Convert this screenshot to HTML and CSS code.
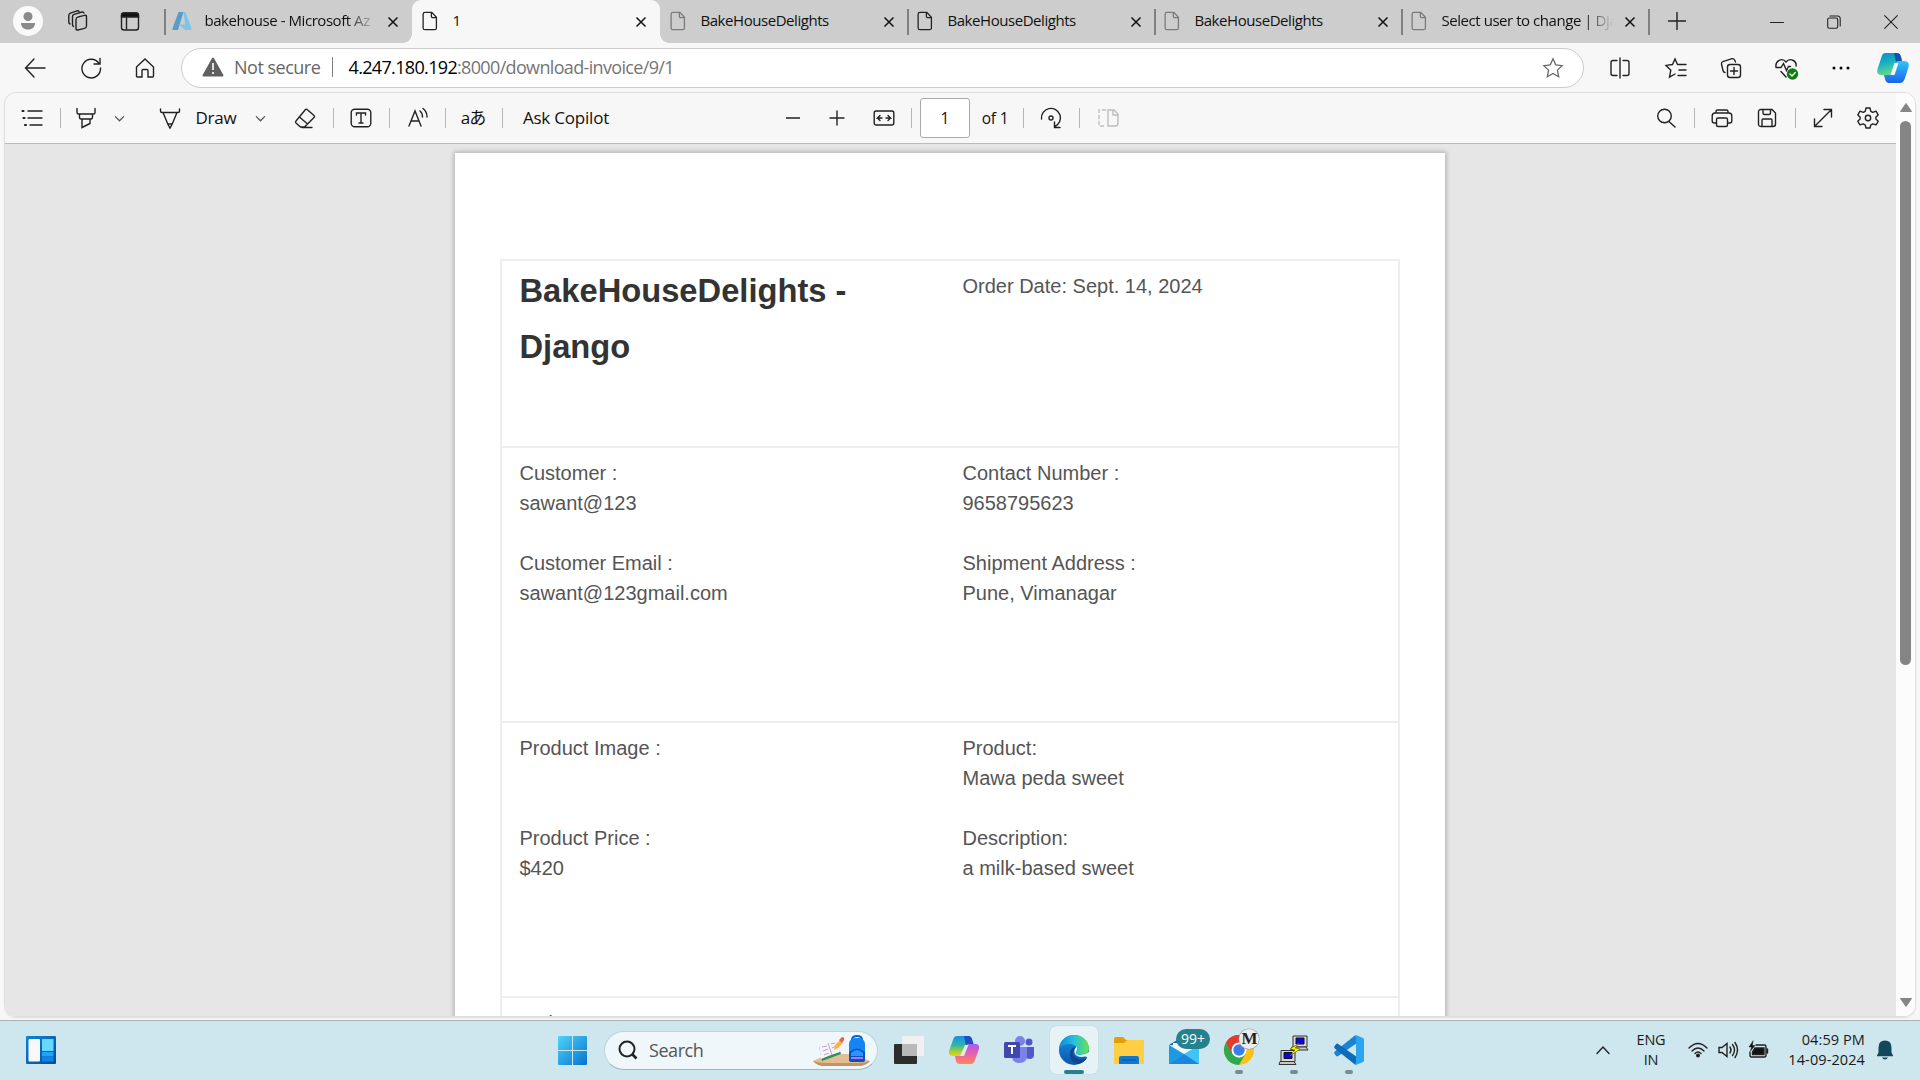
FILE: index.html
```html
<!DOCTYPE html>
<html lang="en">
<head>
<meta charset="utf-8">
<title>1</title>
<link rel="stylesheet" href="styles.css">
</head>
<body>
<svg class="defs" width="0" height="0">
  <symbol id="doc" viewBox="0 0 24 24"><path d="M6.5 2.500H14l5 5.500v11.500a2 2 0 0 1-2 2H6.500a2 2 0 0 1-2-2V4.500a2 2 0 0 1 2-2zM13.500 2.800v4a1.500 1.500 0 0 0 1.500 1.500h4"/></symbol>
  <symbol id="close" viewBox="0 0 12 12"><path d="M1.500 1.500l9 9M10.500 1.500l-9 9"/></symbol>
  <symbol id="chev" viewBox="0 0 12 12"><path d="M1.500 4l4.500 4.500L10.500 4"/></symbol>
</svg>

<div class="browser">
  <div class="tabstrip">
    <div class="corner">
      <span class="avatar"><svg width="18" height="20" viewBox="0 0 18 20"><circle cx="9" cy="5.500" r="4.500" fill="#8a8a8a"/><path d="M2 12h14c0 4-2.500 6.500-7 6.500S2 16 2 12z" fill="#8a8a8a"/></svg></span>
      <svg class="ln" width="24" height="24" viewBox="0 0 24 24"><rect x="10" y="7" width="10.500" height="13" rx="2" transform="skewY(-14) translate(0 4)"/><path d="M7.500 17.500Q6.500 17 6.500 15.500V7.500Q6.500 6 8 5.400L16 3q1.500-.3 2 1M4 15Q2.800 14.500 2.800 13V6.500Q2.800 4.800 4.300 4.200L11 1.800q1.300-.3 2 .5"/></svg>
      <svg class="ln" width="24" height="24" viewBox="0 0 24 24"><rect x="3.500" y="4" width="17" height="17" rx="2.500"/><path d="M3.500 8V6.500A2.500 2.500 0 0 1 6 4h12a2.500 2.500 0 0 1 2.500 2.500V8z" fill="#111"/><path d="M8.500 8v12"/></svg>
    </div>
    <div class="tab sep">
      <svg class="fav" width="22" height="22" viewBox="0 0 22 22"><path d="M7.500 2h5L7 20H2.500Q1 20 1.500 18.500z" fill="#5b9cc4"/><path d="M12.500 2h2l6 16.500Q20.800 20 19.500 20H14L8 14.500h6z" fill="#7cc4ea"/></svg>
      <span class="title fade">bakehouse - Microsoft Az</span><svg class="x"><use href="#close"/></svg>
    </div>
    <div class="tab active"><svg class="fav ln"><use href="#doc"/></svg><span class="title">1</span><svg class="x"><use href="#close"/></svg></div>
    <div class="tab"><svg class="fav ln grey"><use href="#doc"/></svg><span class="title">BakeHouseDelights</span><svg class="x"><use href="#close"/></svg></div>
    <div class="tab sep"><svg class="fav ln"><use href="#doc"/></svg><span class="title">BakeHouseDelights</span><svg class="x"><use href="#close"/></svg></div>
    <div class="tab sep"><svg class="fav ln grey"><use href="#doc"/></svg><span class="title">BakeHouseDelights</span><svg class="x"><use href="#close"/></svg></div>
    <div class="tab sep"><svg class="fav ln grey"><use href="#doc"/></svg><span class="title fade">Select user to change | Dja</span><svg class="x"><use href="#close"/></svg></div>
    <div class="newtab sep"><svg class="ln" width="20" height="20" viewBox="0 0 20 20"><path d="M10 1.500v17M1.500 10h17"/></svg></div>
    <div class="winctl">
      <svg class="ln thin" width="14" height="14" viewBox="0 0 14 14"><path d="M.5 7.500h13"/></svg>
      <svg class="ln thin" width="14" height="14" viewBox="0 0 14 14"><rect x=".7" y="3" width="10" height="10.300" rx="1.500"/><path d="M3 1h7.500A2.500 2.500 0 0 1 13.200 3.500V11"/></svg>
      <svg class="ln thin" width="14" height="14" viewBox="0 0 14 14"><path d="M.7.7l12.600 12.600M13.300.7L.7 13.300"/></svg>
    </div>
  </div>

  <div class="nav">
    <svg class="ln" width="24" height="24" viewBox="0 0 24 24"><path d="M22 12H2.500M11 3L2.500 12l8.500 9"/></svg>
    <svg class="ln" width="24" height="24" viewBox="0 0 24 24"><path d="M20 7.500A9.300 9.300 0 1 0 21.500 12M21 2.500V8h-6"/></svg>
    <svg class="ln" width="24" height="24" viewBox="0 0 24 24"><path d="M3.500 11L12 3l8.500 8v9q0 1-1 1H15v-6.500q0-1-1-1h-4q-1 0-1 1V21H4.500q-1 0-1-1z"/></svg>
    <div class="address">
      <svg width="22" height="20" viewBox="0 0 22 20"><path d="M11 1.500L20.500 18.500H1.500z" fill="#606060" stroke="#606060" stroke-width="2" stroke-linejoin="round"/><path d="M11 6v7M11 15v2" stroke="#fff" stroke-width="1.600"/></svg>
      <span class="insecure">Not secure</span>
      <span class="url"><b>4.247.180.192</b>:8000/download-invoice/9/1</span>
      <svg class="ln star" width="22" height="22" viewBox="0 0 24 24"><path d="M12 2l3 6.500 7 .9-5.200 4.900 1.400 7.200L12 18l-6.200 3.500 1.400-7.200L2 9.400l7-.9z"/></svg>
    </div>
    <svg class="ln" width="24" height="24" viewBox="0 0 24 24"><path d="M12 2v20M9 4.500H5A2 2 0 0 0 3 6.500v11a2 2 0 0 0 2 2h4M15 4.500h4a2 2 0 0 1 2 2v11a2 2 0 0 1-2 2h-4"/></svg>
    <svg class="ln" width="24" height="24" viewBox="0 0 24 24"><path d="M13.500 8.500L11 3 8.500 8.500 2 9.400l4.800 4.800-1.300 7L11 18M13.500 8.500H22M15 14h7M14 19.500h8"/></svg>
    <svg class="ln" width="24" height="24" viewBox="0 0 24 24"><rect x="8.500" y="8.500" width="13" height="13" rx="2.500"/><path d="M15 11.500v7M11.500 15h7M6 16.500q-1.600-.2-2-2L2.500 8q-.3-1.800 1.300-2.400L13 2.700q1.800-.4 2.600 1.300L16.500 6"/></svg>
    <svg class="ln" width="24" height="24" viewBox="0 0 24 24"><path d="M12 21l-5-5.500M2 11c-1-6 6-10 10-5 4-5 11-1 10 4M2 11.500h5l2.500-4 3 7 2-4h2"/><circle cx="18.500" cy="18" r="5.700" fill="#107c10" stroke="none"/><path d="M16 18l2 2 3.300-3.500" stroke="#fff"/></svg>
    <svg width="24" height="24" viewBox="0 0 24 24"><circle cx="5" cy="12" r="1.500"/><circle cx="12" cy="12" r="1.500"/><circle cx="19" cy="12" r="1.500"/></svg>
    <svg width="32" height="30" viewBox="0 0 32 30"><defs><linearGradient id="ca" x2=".3" y2="1"><stop stop-color="#0a8bc9"/><stop offset=".5" stop-color="#16b1c4"/><stop offset="1" stop-color="#62d987"/></linearGradient><linearGradient id="cb" x2="0" y2="1"><stop stop-color="#2fc6f5"/><stop offset="1" stop-color="#1764ee"/></linearGradient></defs><path d="M8.500 0h11q3.500 0 4.500 4l1 4h-3q-3 0-4 4l-2.500 7q-1 3-4 3H5q-6 0-4.500-6L4.500 4Q5.500 0 8.500 0z" fill="url(#ca)"/><path d="M17 0h3q3 0 4 4l1 4h-3q-2 0-3 1z" fill="#1550b0"/><path d="M21.500 8H27q6 0 4.500 6l-3.500 11q-1.500 5-5 5H12q-3 0-4-4l-1-4h4q3.500 0 4.500-3L18 12q1-4 3.500-4z" fill="url(#cb)"/><path d="M17.500 10h4l-4 12h-4z" fill="#f7f7f7"/></svg>
  </div>

  <div class="viewer">
    <div class="main">
      <div class="tools">
        <svg class="ln" width="22" height="22" viewBox="0 0 22 22"><path d="M7 4h14M7 11h14M9 18h12"/><path d="M1.500 4h1M2.500 11h1M4 18h1" stroke-width="2.200"/></svg>
        <i></i>
        <svg class="ln" width="22" height="22" viewBox="0 0 22 22"><path d="M2 1.500v4q0 1.500 1.500 1.500h15Q20 7 20 5.500v-4M4.500 7v3q0 2 1.500 2h10q1.500 0 1.500-2V7M7 12v8.500l8-4V12"/></svg>
        <svg class="ln c" width="11" height="11"><use href="#chev"/></svg>
        <svg class="ln" width="22" height="22" viewBox="0 0 22 22"><path d="M1.500 2v2q0 1.500 1.500 1.500h16q1.500 0 1.500-1.500V2M4 5.500l5 12 2 3.500 2-3.500 5-12M9 17h4"/></svg>
        <span class="label">Draw</span>
        <svg class="ln c" width="11" height="11"><use href="#chev"/></svg>
        <svg class="ln" width="22" height="22" viewBox="0 0 22 22"><path d="M12.500 2L20 8.500q1 1 0 2L10.500 20H6.500L2 16q-1-1 0-2L11.500 2.500q.6-.7 1.500 0zM5.500 10l8 7M8 20.500h10"/></svg>
        <i></i>
        <svg class="ln" width="22" height="22" viewBox="0 0 22 22"><rect x="1.200" y="2.200" width="19.600" height="17.600" rx="3.500"/><path d="M6.500 8V6h9v2M11 6v10M9 16h4"/></svg>
        <i></i>
        <svg class="ln" width="22" height="22" viewBox="0 0 22 22"><path d="M2 19L8 4l6 15M4 14h8M13 4q2.500 2 2.500 6M16 1.500q4 3 4 8.500"/></svg>
        <i></i>
        <span class="label aa">aあ</span>
        <i></i>
        <span class="label">Ask Copilot</span>
        <span></span>
        <svg width="14" height="14" viewBox="0 0 14 14"><path d="M0 7h14" stroke="#555" stroke-width="2"/></svg>
        <svg class="ln" width="16" height="16" viewBox="0 0 16 16"><path d="M8 1v14M1 8h14"/></svg>
        <svg class="ln" width="22" height="22" viewBox="0 0 22 22"><rect x="1.200" y="4" width="19.600" height="14" rx="2"/><path d="M9 11H4.500l2.500-2.500M4.500 11L7 13.500M13 11h4.500L15 8.500M17.500 11L15 13.500"/></svg>
        <i></i>
        <span class="pageno">1</span>
        <span class="label small">of 1</span>
        <i></i>
        <svg class="ln" width="22" height="22" viewBox="0 0 22 22"><path d="M1.500 12A9.500 9.500 0 1 1 15 19.500M14.500 15v5.500H20"/><circle cx="11" cy="11" r="2"/></svg>
        <i></i>
        <svg class="ln off" width="22" height="22" viewBox="0 0 22 22"><path d="M11 3h6l4 4v9q0 3-3 3h-7zM16 3v5h5"/><path d="M8.500 3H2v16h6.500" stroke-dasharray="3 3"/></svg>
        <span></span>
        <svg class="ln" width="20" height="20" viewBox="0 0 20 20"><circle cx="8.500" cy="8" r="6.800"/><path d="M13 13.500l6 5.500"/></svg>
        <i></i>
        <svg class="ln" width="22" height="22" viewBox="0 0 22 22"><path d="M5 6V4.500Q5 3 6.500 3h9Q17 3 17 4.500V6M5 16H3.500Q1.200 16 1.200 14V9Q1.200 6 4 6h14q2.800 0 2.800 3v5q0 2-2.300 2H17"/><rect x="5.500" y="11" width="11" height="8.500" rx="1.500"/></svg>
        <svg class="ln save" width="20" height="20" viewBox="0 0 20 20"><path d="M4 1.500h11l3.500 3.500v11q0 2.500-2.500 2.500H4q-2.500 0-2.500-2.500V4Q1.500 1.500 4 1.500zM6 1.500V5q0 1.500 1.500 1.500h4.500q1.500 0 1.500-1.500V1.500M5 18.500V12q0-1 1-1h8q1 0 1 1v6.500"/></svg>
        <i></i>
        <svg class="ln" width="20" height="20" viewBox="0 0 20 20"><path d="M1.500 18.500l17-17M11 1.500h7.500V9M1.500 11v7.500H9"/></svg>
        <svg class="ln gear" width="24" height="24" viewBox="0 0 24 24"><path d="M10 2h4l.8 3.300 2 1L20 5.200l2.200 3.600-2.300 2.400v1.800l2.300 2.300-2.200 3.600-3.200-1-2 1.100L14 22h-4l-.8-3-2-1.100-3.200 1-2.200-3.600 2.300-2.300v-1.800L1.800 8.800 4 5.200l3.200 1.100 2-1z" stroke-linejoin="round"/><circle cx="12" cy="12" r="2.700"/></svg>
      </div>
      <div class="canvas">
        <div class="sheet">
          <div class="invoice">
            <div class="row head"><h1>BakeHouseDelights - Django</h1><p>Order Date: Sept. 14, 2024</p></div>
            <div class="row"><p>Customer :<br>sawant@123<br><br>Customer Email :<br>sawant@123gmail.com</p><p>Contact Number :<br>9658795623<br><br>Shipment Address :<br>Pune, Vimanagar</p></div>
            <div class="row"><p>Product Image :<br><br><br>Product Price :<br>$420</p><p>Product:<br>Mawa peda sweet<br><br>Description:<br>a milk-based sweet</p></div>
            <div class="row"><p>Order Status :</p><p></p></div>
          </div>
        </div>
      </div>
    </div>
    <div class="scroll">
      <svg width="14" height="11" viewBox="0 0 14 11"><path d="M7 1.500L12.500 9.500h-11z" fill="#858585" stroke="#858585" stroke-linejoin="round"/></svg>
      <span class="thumb"></span>
      <svg class="down" width="14" height="11" viewBox="0 0 14 11"><path d="M7 9.500L1.500 1.500h11z" fill="#858585" stroke="#858585" stroke-linejoin="round"/></svg>
    </div>
  </div>
</div>

<div class="taskbar">
  <div class="widgets"><svg width="30" height="28" viewBox="0 0 30 28"><defs><linearGradient id="wg" x2="1" y2="1"><stop stop-color="#0a84dc"/><stop offset="1" stop-color="#0b4a94"/></linearGradient></defs><rect width="30" height="28" rx="1" fill="url(#wg)"/><rect x="2.500" y="3" width="11.500" height="22.500" rx="1" fill="#f8f8f8"/><path d="M16 3h11.500v12H16z" fill="#67d9ff"/><path d="M16 16h11.500v4.500H16z" fill="#1ea4fb"/><path d="M16 21h11.500v4.500H16z" fill="#0b83ee"/></svg></div>
  <div class="apps">
    <span class="app"><svg width="29" height="29" viewBox="0 0 29 29"><defs><linearGradient id="win" x2="1" y2="1"><stop stop-color="#4fd3fb"/><stop offset="1" stop-color="#0573cf"/></linearGradient></defs><path d="M1 0h13v14H0V1q0-1 1-1zM15 0h13q1 0 1 1v13H15zM0 15h14v14H1q-1 0-1-1zM15 15h14v13q0 1-1 1H15z" fill="url(#win)"/></svg></span>
    <div class="search">
      <svg width="20" height="20" viewBox="0 0 20 20" fill="none" stroke="#222" stroke-width="2"><circle cx="9" cy="9" r="7.500"/><path d="M14 14l4.500 4.500" stroke-width="2.600"/></svg>
      <span>Search</span>
      <svg class="school" width="57" height="32" viewBox="0 0 57 32"><path d="M0 26l11-5q4-2 10-2h19l17 7q-4 5-12 5H12Q4 31 0 26z" fill="#e2bd95"/><path d="M0 26q6 2 13 2h31q7 0 13-2-4 5-12 5H12Q4 31 0 26z" fill="#c4935f"/><path d="M6 11l3 15 19-7-1-3z" fill="#2a9159"/><path d="M6 10l9-2 8-3 4 12-9 3-10 4z" fill="#f7f3fb"/><path d="M15 8l4 12M9 12l5-1M10 16l5-2M11 20l5-2M18 9l4-1M19 13l4-2" stroke="#b2a6cc" fill="none"/><path d="M21 15l1-5 5-5 3 3-5 5z" fill="#ffb239"/><path d="M26 5l3-3q3 0 2 3l-2 3z" fill="#f15e54"/><path d="M39 5q0-4 5-4t5 4" fill="none" stroke="#0663c8" stroke-width="2"/><rect x="36" y="3" width="16" height="24" rx="6" fill="#1585f5"/><path d="M36 17q8-7 16 0v8q0 2-3 2H39q-3 0-3-2z" fill="#0652c5"/><path d="M38 18q6-6 12 0v3H38z" fill="#2b94ff"/><path d="M38 23h12" stroke="#a879ed" stroke-width="2"/></svg>
    </div>
    <span class="app"><svg width="30" height="28" viewBox="0 0 30 28"><rect y="8" width="23" height="20" rx="1" fill="#2d2d2d"/><rect x="8" width="22" height="20" rx="1" fill="#f1f1f1"/><path d="M8 8h15v12H8z" fill="#b9b9b9"/></svg></span>
    <span class="app"><svg width="30" height="28" viewBox="0 0 30 28"><defs><linearGradient id="pa" x2="0" y2="1"><stop stop-color="#1a8fe6"/><stop offset=".45" stop-color="#2fb5a8"/><stop offset=".75" stop-color="#9bcf3b"/><stop offset="1" stop-color="#f2d01c"/></linearGradient><linearGradient id="pb" x2="0" y2="1"><stop stop-color="#a45cf0"/><stop offset=".5" stop-color="#ec5fae"/><stop offset="1" stop-color="#ff8a48"/></linearGradient></defs><path d="M8 0h11q3 0 4 3l1.500 5H20q-2.500 0-3.500 3l-2 6q-1 3-4 3H4q-5 0-4-5L4 4Q5 0 8 0z" fill="url(#pa)"/><path d="M15 0h4q3 0 4 3l1.500 5H20q-2 0-3 2z" fill="#1f4fc8"/><path d="M20.500 8H26q5 0 4 5l-4 11q-1 4-4 4H11q-3 0-4-3l-1-5h4.500q3 0 4-3l2.500-6q1-3 3.500-3z" fill="url(#pb)"/><path d="M16 9h3.500L15 20h-4z" fill="#dcecf3"/></svg></span>
    <span class="app"><svg width="30" height="28" viewBox="0 0 30 28"><circle cx="16" cy="5" r="5" fill="#7b83eb"/><circle cx="25" cy="6" r="3.500" fill="#5059c9"/><path d="M21 11h9v8q0 4-4.500 4-3 0-4.500-2z" fill="#5059c9"/><path d="M8 11h15v9q0 7-7.500 7T8 20z" fill="#7b83eb"/><rect y="6" width="16" height="16" rx="1.500" fill="#4048ae"/><path d="M4 10h8M8 10v8" stroke="#fff" stroke-width="2"/></svg></span>
    <span class="app on"><svg width="30" height="30" viewBox="0 0 30 30"><defs><linearGradient id="e1" x1="0" x2="1"><stop stop-color="#1188d6"/><stop offset=".5" stop-color="#24c0e0"/><stop offset="1" stop-color="#6be24d"/></linearGradient><linearGradient id="e2" x2="0" y2="1"><stop stop-color="#1790e0"/><stop offset="1" stop-color="#0d55ad"/></linearGradient></defs><circle cx="15" cy="15" r="15" fill="url(#e2)"/><path d="M0 14C1 5 7 0 15 0c9 0 15 6 15 13 0 5-4 7-8 7-3 0-5-1-5-2s2-2 1-5C16 8 5 7 0 14z" fill="url(#e1)"/><path d="M17 12q-6 0-6 7 0 8 8 10 6-1 9-6-4 2-8 1-6-2-6-6 0-3 3-6z" fill="#10468c"/><path d="M18 11.500q-4 3-2 7.500 3 4 10 2.500l4 1q1-2 0-5.500-4 3-8 3-5 0-5-2 0-1 1-3z" fill="#e6f2f6"/></svg></span>
    <span class="app"><svg width="30" height="27" viewBox="0 0 30 27"><path d="M0 7V2q0-2 2-2h7l3 3h16q2 0 2 2v3H0z" fill="#dfa00a"/><path d="M0 6h10l3-3h15q2 0 2 2v22H0z" fill="#ffce45"/><path d="M5 27v-6q0-2 2-2h16q2 0 2 2v6z" fill="#1079cf"/><path d="M8 23h14" stroke="#08519a"/></svg></span>
    <span class="app"><svg width="30" height="28" viewBox="0 0 30 28"><path d="M0 9L15 0l15 9z" fill="#0d5db5"/><path d="M4 7h22v8l-11 6-11-6z" fill="#f3f6f8"/><path d="M0 9l15 9v10H0z" fill="#1d9ae4"/><path d="M30 9v19H0l15-10z" fill="#42c3f5"/><path d="M0 28l15-10 15 10z" fill="#1a86dd"/></svg><em class="badge">99+</em></span>
    <span class="app run"><svg width="30" height="30" viewBox="0 0 30 30"><circle cx="15" cy="15" r="15" fill="#fbc116"/><path d="M2 7.500A15 15 0 0 1 28 7.500H15z" fill="#e33b2e"/><path d="M2 7.500L8.500 19 15 22.500 15 30A15 15 0 0 1 2 7.500z" fill="#2da94f"/><path d="M2 7.500A15 15 0 0 1 15 0v7.500L9 13l-1 6z" fill="#e33b2e"/><path d="M15 30l7-12-7 5z" fill="#2da94f"/><circle cx="15" cy="15" r="7.500" fill="#fff"/><circle cx="15" cy="15" r="5.700" fill="#397fec"/></svg><em class="profile">M</em></span>
    <span class="app run"><svg width="30" height="30" viewBox="0 0 30 30"><g id="pc"><path d="M14 1h14v11H14z" fill="#d9d9d9" stroke="#333"/><path d="M17 3h8v6h-8z" fill="#0804f0" stroke="#111"/><path d="M13 12h14l2 3H12z" fill="#c7c7c7" stroke="#333"/></g><use href="#pc" x="-12" y="14.500"/><path d="M20 8l-9 6 5 1-5 6 10-7-5-1z" fill="#ff0" stroke="#665c00" stroke-width=".7"/></svg></span>
    <span class="app run"><svg width="30" height="30" viewBox="0 0 30 30"><path d="M1 19.500l-.7-1q-.5-1 .5-2L21.500 0l1.500 8L3.500 21.500q-1 .5-2.500-2z" fill="#1b84d2"/><path d="M1 10.500l-.7 1q-.5 1 .5 2L21.500 30l1.500-8L3.500 8.500Q2.500 8 1 10.500z" fill="#0d6cb8"/><path d="M22 0l7 3q1 .5 1 1.500v21q0 1-1 1.500l-7 3q-1-1 0-2V2q-1-1 0-2z" fill="#2ba5f2"/></svg></span>
  </div>
  <div class="tray">
    <svg class="ln b" width="14" height="10" viewBox="0 0 14 10"><path d="M1 8.500L7 2l6 6.500"/></svg>
    <span class="lang">ENG<br>IN</span>
    <svg class="ln b" width="20" height="16" viewBox="0 0 20 16"><path d="M1 6q9-9 18 0M4 9q6-6 12 0M7 11.500q3-3 6 0"/><circle cx="10" cy="13.500" r="1.300" fill="#111"/></svg>
    <svg class="ln b" width="20" height="18" viewBox="0 0 20 18"><path d="M1 6.500h3l5-4v13l-5-4H1zM12 6q2 3 0 6M14.500 3.500q4 5.500 0 11M17 1.500q5 7.500 0 15"/></svg>
    <svg class="ln b" width="21" height="18" viewBox="0 0 21 18"><path d="M8 4h8.500Q18 4 18 6v8q0 2-1.500 2h-13Q2 16 2 14v-3M19.500 8v4"/><path d="M7 7h9v6.500H4.500V11z" fill="#111"/><path d="M5 0L1 6h2.500L2.500 10 7 4.500H4.500z" fill="#111" stroke-width=".5"/></svg>
    <span class="clock">04:59 PM<br>14-09-2024</span>
    <svg width="18" height="20" viewBox="0 0 18 20"><path d="M9 .5q6.500 0 6.500 7v5l1.500 3v.7H1v-.7l1.500-3v-5q0-7 6.500-7zM6 17.500h6q-1 2-3 2t-3-2z" fill="#13485a"/></svg>
  </div>
</div>
</body>
</html>
```
FILE: styles.css
```css
* { box-sizing: border-box; }
body { margin: 0; width: 1920px; height: 1080px; overflow: hidden; font-family: "Open Sans", "Noto Sans CJK JP", sans-serif; color: #111; background: #f7f7f7; }
svg { display: block; flex: none; overflow: visible; }
.defs { position: absolute; }
.ln { fill: none; stroke: #222; stroke-width: 1.4; stroke-linecap: round; }
.thin { stroke-width: 1.1; }
.browser { height: 1020px; display: flex; flex-direction: column; background: #f7f7f7; }

.tabstrip { height: 43px; display: flex; background: #cdcdcd; }
.corner { width: 164px; display: grid; grid-template-columns: 30px 24px 24px; column-gap: 24px; padding: 0 0 2px 13px; align-items: center; }
.corner .ln:last-child { margin-left: 3px; }
.corner .ln:nth-child(2) { margin-left: -1px; }
.avatar { width: 30px; height: 30px; border-radius: 50%; background: #fafafa; display: grid; place-items: center; }
.tab { width: 247px; display: flex; align-items: center; padding: 0 0 2px 7px; position: relative; }
.tab:nth-child(2), .tab.active { width: 248px; }
.sep::before { content: ""; position: absolute; left: 0; top: 9px; width: 1.5px; height: 26px; background: #808080; }
.fav { width: 22px; height: 22px; }
.fav.grey { stroke: #7b7b7b; }
.title { width: 173px; margin-left: 11.5px; margin-top: -2px; font-size: 15px; line-height: 20px; letter-spacing: -.45px; white-space: nowrap; color: #111; }
.fade { background: linear-gradient(90deg, #111 82%, #cdcdcd 99%); -webkit-background-clip: text; background-clip: text; color: transparent; }
.tab .x { width: 12px; height: 12px; margin-left: 9.5px; stroke: #111; stroke-width: 1.5; margin-top: 2px; }
.active { background: #f7f7f7; border-radius: 9px 9px 0 0; }
.active::before, .active::after { content: ""; position: absolute; bottom: 0; width: 9px; height: 9px; }
.active::before { left: -9px; background: radial-gradient(circle at 0 0, transparent 8.5px, #f7f7f7 9px); }
.active::after { right: -9px; background: radial-gradient(circle at 100% 0, transparent 8.5px, #f7f7f7 9px); }
.newtab { position: relative; width: 56px; padding: 11px 0 0 19px; }
.winctl { margin-left: auto; padding-right: 22px; display: flex; gap: 43px; align-items: center; }

.nav { height: 49px; display: grid; grid-template-columns: 69px 43px 66px 1406px 71px 42px 68px 42px 68px 36px; align-items: center; justify-items: center; }
.address { width: 1403px; height: 40px; justify-self: end; border: 1px solid #ccc; border-radius: 20px; background: #fff; display: flex; align-items: center; padding-left: 20px; font-size: 18px; letter-spacing: -.66px; white-space: nowrap; }
.address svg:first-child { margin-top: -1px; }
.insecure { width: 99px; margin: -1px 0 0 10px; color: #666; border-right: 1.500px solid #808080; line-height: 20px; letter-spacing: -.5px; }
.url { margin: -2px 0 0 15.5px; color: #757575; }
.url b { font-weight: 400; color: #000; }
.star { margin-left: auto; margin-right: 19px; stroke: #666; }

.viewer { height: 924.5px; margin: 0 4px; border: 1px solid #dedede; border-radius: 12px; overflow: hidden; display: flex; box-shadow: 0 1px 1px #e0e0e0; }
.main { width: 1891px; }
.tools { height: 51px; border-bottom: 1px solid #bbb; display: grid; align-items: center; justify-items: center; padding-left: 13px; white-space: nowrap;
  grid-template-columns: 28px 28px 24px 42px 60px 32px 56px 34px 22px 34px 22px 36px 18px 38px 20px 108px 150px 46px 42px 52px 2px 66px 34px 22px 34px 22px 36px 526px 28px 28px 28px 45px 28px 28px 59px; }
.tools i { width: 1px; height: 20px; background: #b5b5b5; }
.tools .c { stroke: #555; }
.tools .save { margin-left: 17px; }
.tools .gear { margin-left: 2px; }
.tools .off { stroke: #bdbdbd; }
.label { font-size: 17px; letter-spacing: -.2px; line-height: 22px; }
.aa { font-size: 17px; letter-spacing: -1px; }
.small { font-size: 15.5px; }
.pageno { width: 50px; height: 40px; border: 1px solid #aaa; border-radius: 3px; background: #fff; font-size: 15.5px; line-height: 38px; text-align: center; }
.canvas { height: 873px; background: #e6e6e6; overflow: hidden; padding: 9px 0 0 450px; }
.sheet { width: 990px; height: 1200px; background: #fff; box-shadow: 0 0 5px 1px rgba(0,0,0,.25); padding: 106px 45px 0; }
.invoice { border: 2px solid #eee; height: 1100px; font: 20px/30px "Liberation Sans", Arial, sans-serif; color: #555; }
.row { height: 275px; display: grid; grid-template-columns: 443px 1fr; padding: 10px 0 0 17.5px; border-bottom: 2px solid #eee; }
.row.head { height: 187px; }
.row p { margin: 0; }
.row h1 { margin: -8px 0 0; width: 350px; font-size: 32.7px; line-height: 56px; color: #333; }
.scroll { width: 19px; background: #fcfcfc; display: flex; flex-direction: column; align-items: center; padding: 9px 0 8px; }
.thumb { width: 11px; height: 544px; margin-top: 8px; border-radius: 6px; background: #858585; }
.down { margin-top: auto; }

.taskbar { height: 60px; border-top: 1px solid #a6b4ba; background: #cee7ee; display: flex; align-items: center; }
.widgets { width: 79px; padding-left: 26px; margin-bottom: 2px; }
.apps { margin-left: 466px; display: flex; align-items: center; height: 59px; }
.app { width: 55px; height: 58px; margin-bottom: 1px; display: grid; place-items: center; position: relative; }
.app svg { position: relative; }
.on::before { content: ""; position: absolute; width: 48px; height: 48px; left: 3.500px; top: 5px; border-radius: 6px; background: #e6f2f6; box-shadow: 0 0 1px #9fb8c0; }
.on::after, .run::after { content: ""; position: absolute; bottom: 5px; width: 20px; height: 4px; border-radius: 2px; background: #26818f; }
.run::after { width: 8px; background: #7c898d; }
.search { width: 274px; height: 39px; margin: 0 3px 1px 4px; border-radius: 20px; background: #eff7fa; border: 1px solid #bcd4db; border-bottom-color: #9fb6be; display: flex; align-items: center; padding-left: 13px; font-size: 18px; letter-spacing: -.45px; color: #555; }
.search span { margin-left: 11px; }
.school { margin: 2px 7px 0 auto; }
.badge { position: absolute; left: 20px; top: 8px; width: 34px; height: 20px; border-radius: 10px; background: #26818f; color: #fff; font: 14px/20px "Open Sans", sans-serif; text-align: center; }
.profile { position: absolute; left: 28px; top: 8px; width: 20px; height: 20px; border-radius: 50%; background: #ececec; box-shadow: 0 0 0 .5px #999; font: 700 17px/20px "Liberation Serif", serif; text-indent: 1px; text-align: center; color: #222; }
.tray { margin-left: auto; display: grid; grid-template-columns: 36px 60px 34px 26px 34px 90px 40px; padding: 0 15px 1px 0; align-items: center; justify-items: center; font-size: 14.5px; line-height: 20px; letter-spacing: -.2px; text-align: center; color: #1a1a1a; }
.clock { justify-self: end; text-align: right; white-space: nowrap; letter-spacing: .1px; }
```
